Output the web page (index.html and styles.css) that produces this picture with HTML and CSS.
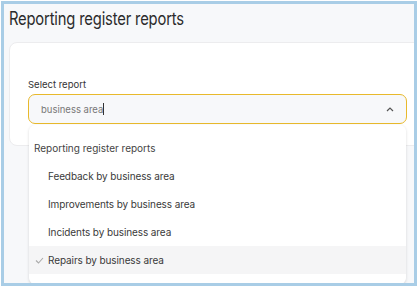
FILE: index.html
```html
<!DOCTYPE html>
<html lang="en">
<head>
    <meta charset="UTF-8">
    <meta name="viewport" content="width=device-width, initial-scale=1.0">
    <title>Reporting register reports</title>
    <link rel="stylesheet" href="styles.css">
</head>
<body>
    <div class="frame">
        <h1 class="page-title">Reporting register reports</h1>
        <div class="card">
            <label class="field-label">Select report</label>
            <div class="select">
                <span class="select-value">business area<span class="caret"></span></span>
                <svg class="chevron" width="8" height="5" viewBox="0 0 8 5">
                    <path d="M1 4 L4 1 L7 4" fill="none" stroke="#555" stroke-width="1.2"/>
                </svg>
            </div>
        </div>
        <div class="dropdown">
            <div class="group-title">Reporting register reports</div>
            <div class="option">Feedback by business area</div>
            <div class="option">Improvements by business area</div>
            <div class="option">Incidents by business area</div>
            <div class="option selected">
                <svg class="check" width="9" height="7" viewBox="0 0 9 7">
                    <path d="M1 3.5 L3.5 6 L8 1" fill="none" stroke="#aaa" stroke-width="1.1"/>
                </svg>
                Repairs by business area
            </div>
        </div>
    </div>
</body>
</html>
```

FILE: styles.css
```css
body {
    margin: 0;
    background-color: #ffffff;
    font-family: Inter, "Noto Sans", sans-serif;
}
.frame {
    position: relative;
    margin: 1px;
    width: 410px;
    height: 279px;
    border: 3px solid #a9cde6;
    background-color: #f7f8fa;
    overflow: hidden;
}
.page-title {
    margin: 0;
    padding: 3px 0 0 6px;
    height: 35px;
    font-size: 18px;
    font-weight: 400;
    letter-spacing: -0.2px;
    color: #2b2b2b;
    line-height: 24px;
    transform: scaleX(0.82);
    transform-origin: left center;
}
.card {
    margin-left: 5px;
    width: 430px;
    height: 104px;
    background-color: #ffffff;
    border: 1px solid #ececee;
    border-radius: 8px;
    padding: 36px 0 0 18px;
    box-sizing: border-box;
}
.field-label {
    display: block;
    font-size: 9.5px;
    color: #333;
    margin-bottom: 4px;
}
.select {
    display: flex;
    align-items: center;
    justify-content: space-between;
    width: 379px;
    height: 30px;
    box-sizing: border-box;
    border: 1.5px solid #e8b92c;
    border-radius: 7px;
    background-color: #f7f8fa;
    padding: 0 12px 0 12px;
}
.select-value {
    font-size: 9.5px;
    color: #777;
}
.caret {
    display: inline-block;
    width: 1px;
    height: 12px;
    background-color: #333;
    vertical-align: -2px;
}
.dropdown {
    position: absolute;
    left: 25px;
    top: 121px;
    width: 377px;
    height: 159px;
    background-color: #ffffff;
    border-radius: 6px;
    box-shadow: 0 1px 3px rgba(0, 0, 0, 0.15);
    padding-top: 9px;
    box-sizing: border-box;
}
.group-title {
    height: 28px;
    line-height: 28px;
    padding-left: 5px;
    font-size: 10px;
    color: #444;
}
.option {
    position: relative;
    height: 28px;
    line-height: 28px;
    padding-left: 19px;
    font-size: 10px;
    letter-spacing: -0.1px;
    color: #3a3a3a;
}
.option.selected {
    background-color: #f5f5f6;
}
.check {
    position: absolute;
    left: 6px;
    top: 11px;
}
```
